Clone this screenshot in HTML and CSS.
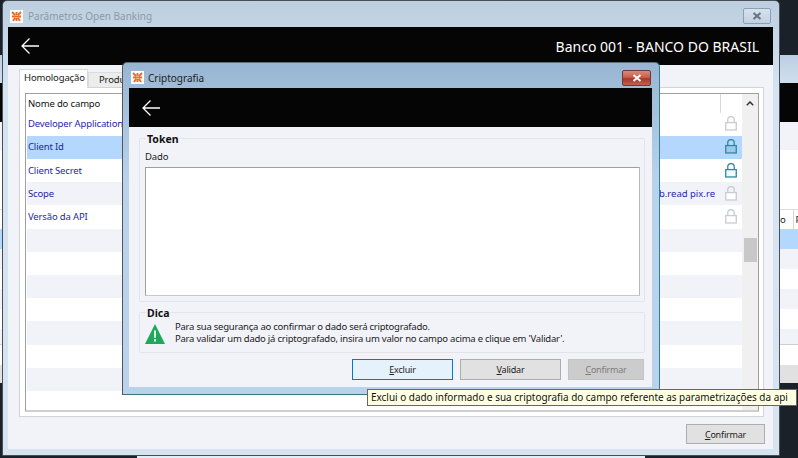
FILE: index.html
```html
<!DOCTYPE html>
<html lang="pt">
<head>
<meta charset="utf-8">
<title>Parâmetros Open Banking</title>
<link rel="stylesheet" href="styles.css">
</head>
<body>
<div class="desktop">
  <div class="back-window">
    <div class="bw-title"></div>
    <div class="bw-black"></div>
    <div class="bw-light"></div>
    <div class="bw-white"></div>
    <div class="bw-head"><span>o</span><span class="bw-p">P</span></div>
    <div class="bw-row sel"></div>
    <div class="bw-row alt"></div>
    <div class="bw-row"></div>
    <div class="bw-row alt"></div>
    <div class="bw-row"></div>
    <div class="bw-row alt short"></div>
    <div class="bw-lines"></div>
    <div class="bw-gray"></div>
  </div>
  <div class="bottom-strip"></div>

  <section class="window main">
    <header class="titlebar">
      <svg class="app-icon" viewBox="0 0 13 13"><rect width="13" height="13" fill="#fff"/><path d="M2 2l3 3M8 5l3-3M6.500 2v3M2 6.500h9M3 11l2-3M10 11L8 8M6.500 8v3" stroke="#f26a21" stroke-width="1.900" fill="none"/></svg>
      <span class="title-text faded">Parâmetros Open Banking</span>
      <span class="close inactive"><svg viewBox="0 0 10 8"><path d="M1.500 1l7 6M8.500 1l-7 6" stroke="#66727d" stroke-width="2"/></svg></span>
    </header>
    <div class="black-bar">
      <svg class="arrow" viewBox="0 0 18 16"><path d="M18 8H1M8.500 .5L1 8l7.500 7.500" stroke="#fff" stroke-width="1.300" fill="none"/></svg>
      <span class="bank">Banco 001 - BANCO DO BRASIL</span>
    </div>
    <div class="main-body">
      <div class="tabs">
        <span class="tab active">Homologação</span>
        <span class="tab">Produção</span>
      </div>
      <div class="tab-panel">
        <div class="grid">
          <div class="grid-table">
            <div class="row head"><span class="cell-name black">Nome do campo</span><span class="cell-mid"></span><span class="cell-lock sep"></span></div>
            <div class="row"><span class="cell-name">Developer Application Key</span><span class="cell-mid"></span><span class="cell-lock"><svg class="lock" viewBox="0 0 13 16"><path class="shackle" d="M3 7V4a3.500 3.500 0 0 1 7 0v3"/><rect class="body" x=".8" y="7" width="11.400" height="8"/></svg></span></div>
            <div class="row sel"><span class="cell-name">Client Id</span><span class="cell-mid"></span><span class="cell-lock"><svg class="lock on" viewBox="0 0 13 16"><path class="shackle" d="M3 7V4a3.500 3.500 0 0 1 7 0v3"/><rect class="body" x=".8" y="7" width="11.400" height="8"/></svg></span></div>
            <div class="row"><span class="cell-name">Client Secret</span><span class="cell-mid"></span><span class="cell-lock"><svg class="lock on" viewBox="0 0 13 16"><path class="shackle" d="M3 7V4a3.500 3.500 0 0 1 7 0v3"/><rect class="body" x=".8" y="7" width="11.400" height="8"/></svg></span></div>
            <div class="row alt"><span class="cell-name">Scope</span><span class="cell-mid">b.read pix.re</span><span class="cell-lock"><svg class="lock" viewBox="0 0 13 16"><path class="shackle" d="M3 7V4a3.500 3.500 0 0 1 7 0v3"/><rect class="body" x=".8" y="7" width="11.400" height="8"/></svg></span></div>
            <div class="row"><span class="cell-name">Versão da API</span><span class="cell-mid"></span><span class="cell-lock"><svg class="lock" viewBox="0 0 13 16"><path class="shackle" d="M3 7V4a3.500 3.500 0 0 1 7 0v3"/><rect class="body" x=".8" y="7" width="11.400" height="8"/></svg></span></div>
            <div class="row alt"></div>
            <div class="row"></div>
            <div class="row alt"></div>
            <div class="row"></div>
            <div class="row alt"></div>
            <div class="row"></div>
            <div class="row alt"></div>
          </div>
          <div class="scrollbar">
            <svg class="chev" viewBox="0 0 8 5"><path d="M.8 4.200L4 1l3.200 3.200" stroke="#333" stroke-width="1.500" fill="none"/></svg>
            <span class="thumb"></span>
          </div>
        </div>
      </div>
      <div class="main-actions"><button class="btn main-confirm"><u>C</u>onfirmar</button></div>
    </div>
  </section>

  <section class="window dialog">
    <header class="titlebar">
      <svg class="app-icon" viewBox="0 0 13 13"><rect width="13" height="13" fill="#fff"/><path d="M2 2l3 3M8 5l3-3M6.500 2v3M2 6.500h9M3 11l2-3M10 11L8 8M6.500 8v3" stroke="#f26a21" stroke-width="1.900" fill="none"/></svg>
      <span class="title-text">Criptografia</span>
      <span class="close danger"><svg viewBox="0 0 10 8"><path d="M1.500 1l7 6M8.500 1l-7 6" stroke="#fff" stroke-width="2"/></svg></span>
    </header>
    <div class="black-bar">
      <svg class="arrow" viewBox="0 0 18 16"><path d="M18 8H1M8.500 .5L1 8l7.500 7.500" stroke="#fff" stroke-width="1.300" fill="none"/></svg>
    </div>
    <div class="dialog-body">
      <div class="group token">
        <span class="legend">Token</span>
        <span class="field-label">Dado</span>
        <div class="textarea"></div>
      </div>
      <div class="group hint">
        <span class="legend">Dica</span>
        <svg class="warn" viewBox="0 0 20 20"><path d="M10 0L20 20H0z" fill="#1ea85a"/><path d="M9 6.500h2l-.3 7.500H9.300zM9 15.200h2v2.200H9z" fill="#fff"/></svg>
        <p class="hint-text">Para sua segurança ao confirmar o dado será criptografado.<br>Para validar um dado já criptografado, insira um valor no campo acima e clique em 'Validar'.</p>
      </div>
      <div class="dialog-actions">
        <button class="btn focus"><u>E</u>xcluir</button>
        <button class="btn"><u>V</u>alidar</button>
        <button class="btn disabled"><u>C</u>onfirmar</button>
      </div>
    </div>
  </section>

  <div class="tooltip">Exclui o dado informado e sua criptografia do campo referente as parametrizações da api</div>
</div>
</body>
</html>
```

FILE: styles.css
```css
* { box-sizing: border-box; }
html, body { margin: 0; padding: 0; }
body { width: 798px; height: 458px; overflow: hidden; background: #1b2128; font-family: "Noto Sans", "Liberation Sans", sans-serif; font-size: 9.5px; letter-spacing: -0.15px; color: #1a1a1a; }
.desktop { position: relative; width: 798px; height: 458px; overflow: hidden; }

/* window behind, visible only at the left and right edges */
.back-window { position: absolute; left: -20px; top: 55px; width: 840px; height: 328px; display: flex; flex-direction: column; background: #f2f3f9; }
.bw-title { height: 28px; background: linear-gradient(#bccfe2, #cfdeed); }
.bw-black { height: 39px; background: #050505; }
.bw-light { height: 28px; background: #f2f3f9; }
.bw-white { height: 60px; background: #fff; border-bottom: 1px solid #dcdcdc; }
.bw-head { height: 19px; background: #fff; padding-left: 800px; display: flex; align-items: center; font-size: 9.5px; }
.bw-p { margin-left: 7px; padding-left: 2px; border-left: 1px solid #d8d8d8; line-height: 19px; }
.bw-row { height: 20px; background: #fff; }
.bw-row.sel { background: #b3d7fd; }
.bw-row.alt { background: #f2f3f9; }
.bw-row.short { height: 15px; }
.bw-lines { height: 21px; background: #fff; border-top: 1px solid #cfcfcf; }
.bw-gray { flex: 1; background: #e1e1e1; }
.bottom-strip { position: absolute; left: 137px; top: 455px; width: 508px; height: 3px; background: #e4edf6; }

/* windows */
.window { position: absolute; display: flex; flex-direction: column; border: 1px solid #4a4f55; border-radius: 5px 5px 0 0; }
.main { left: 2px; top: 0; width: 778px; height: 456px; padding: 0 6px 6px 5px; background: linear-gradient(#bccedf, #d6e4f2 90px); }
.dialog { left: 122px; top: 62px; width: 538px; height: 333px; padding: 0 7px 7px 6px; background: linear-gradient(#98b6d3, #b9d3ec 120px); border-color: #5a6f78 #2d8296 #3d6f7d #555; }

.titlebar { display: flex; align-items: center; height: 26px; flex: none; padding: 4px 0 0 2px; letter-spacing: 0; }
.dialog .titlebar { height: 25px; }
.app-icon { width: 13px; height: 13px; flex: none; margin-right: 5px; }
.dialog .app-icon { margin-right: 4px; }
.title-text { font-size: 10px; color: #222; flex: 1; }
.title-text.faded { color: #8c9aa6; }
.close { width: 28px; height: 16px; display: flex; align-items: center; justify-content: center; border-radius: 2px; flex: none; }
.close svg { width: 10px; height: 8px; }
.close.inactive { border: 1px solid #8ba0b5; background: linear-gradient(#d6e2ee, #c2d1e0); margin-right: 2px; }
.close.danger { width: 29px; border: 1px solid #6a3a3f; background: linear-gradient(#d98a78 0, #c85f4c 45%, #a8372a 55%, #c4604e); margin-right: 1px; }

.black-bar { height: 38px; flex: none; background: #050505; display: flex; align-items: center; justify-content: space-between; padding: 0 14px 0 13px; color: #fff; letter-spacing: 0; }
.dialog .black-bar { height: 39px; }
.arrow { width: 18px; height: 16px; }
.bank { font-size: 14px; }

.main-body { flex: 1; background: #f2f3f9; display: flex; flex-direction: column; padding: 4px 9px 0 11px; }
.tabs { display: flex; height: 18px; align-items: flex-end; flex: none; }
.tab { height: 15px; padding: 0 12px 0 10px; background: #ececec; border: 1px solid #dcdcdc; border-bottom: 0; line-height: 14px; width: 70px; white-space: nowrap; overflow: hidden; }
.tab.active { height: 19px; background: #fff; border-color: #d9d9d9; padding: 1px 0 0 4px; width: 69px; line-height: 14px; margin-bottom: -1px; position: relative; z-index: 1; }
.tab-panel { height: 330px; flex: none; background: #fff; border: 1px solid #d4d4d4; padding: 5px 4px 4px 5px; }
.grid { height: 100%; display: flex; border: 1px solid #a0a0a0; border-bottom: 2px solid #cfcfcf; background: #fff; padding-left: 1px; }
.grid-table { flex: 1; display: flex; flex-direction: column; overflow: hidden; min-width: 0; }
.row { height: 23.200px; flex: none; display: flex; align-items: center; background: #fff; color: #1f1fb0; padding: 0 0 1px 1px; }
.row.head { height: 18.700px; color: #111; padding-bottom: 0; }
.row.alt { background: #f2f3f9; }
.row.sel { background: #b3d7fd; }
.cell-name { width: 630px; white-space: nowrap; flex: none; }
.cell-name.black { color: #111; }
.cell-mid { flex: 1; text-align: right; white-space: nowrap; padding-right: 5px; overflow: hidden; letter-spacing: 0; }
.cell-lock { width: 22px; height: 100%; display: flex; align-items: center; flex: none; padding-left: 5px; }
.cell-lock.sep { border-left: 1px solid #d8d8d8; }
.lock { width: 12px; height: 15px; }
.lock .shackle, .lock .body { fill: none; stroke: #c9cbce; stroke-width: 1.400; }
.lock .body { fill: #fff; }
.lock.on .shackle, .lock.on .body { stroke: #2f86a6; }
.lock.on .body { fill: #f2fafd; }
.row.sel .lock .body { fill: #9ccbe8; }
.scrollbar { width: 16px; flex: none; background: #f0f0f0; display: flex; flex-direction: column; align-items: center; padding-top: 7px; }
.chev { width: 8px; height: 5px; flex: none; }
.thumb { width: 13px; height: 24px; background: #c8c8c8; margin-top: 132px; flex: none; }
.main-actions { display: flex; justify-content: flex-end; padding-top: 7px; }

.btn { font: inherit; font-size: 9px; letter-spacing: -0.2px; color: #222; background: #e1e1e1; border: 1px solid #adadad; padding: 0; height: 21px; width: 101px; }
.btn.focus { background: #e5f1fb; border: 1px solid #0078d7; }
.btn.disabled { background: #cccccc; border-color: #c4c4c4; color: #7d7d7d; width: 76px; }
.btn.main-confirm { width: 79px; height: 20px; margin-right: -1px; }

.dialog-body { flex: 1; background: #f2f3f9; padding: 11px 7px 0 10px; display: flex; flex-direction: column; }
.group { position: relative; border: 1px solid #e3e4ea; border-radius: 2px; flex: none; }
.legend { position: absolute; left: 6px; top: -6px; background: #f2f3f9; padding: 0 1px; font-weight: 700; font-size: 10.5px; letter-spacing: 0; line-height: 12px; color: #111; }
.token { height: 164px; padding: 10px 4px 5px 5px; display: flex; flex-direction: column; }
.field-label { line-height: 15px; height: 18px; flex: none; }
.textarea { flex: 1; background: #fff; border: 1px solid #9f9f9f; border-bottom-color: #c9c9c9; border-right-color: #b9b9b9; }
.hint { height: 41px; margin-top: 10px; display: flex; align-items: center; padding-left: 5px; gap: 10px; }
.warn { width: 20px; height: 20px; flex: none; margin-top: 2px; }
.hint-text { margin: 1px 0 0; line-height: 12px; letter-spacing: -0.23px; color: #222; white-space: nowrap; }
.dialog-actions { display: flex; justify-content: flex-end; gap: 7px; margin-top: 6px; padding-right: 1px; }

.tooltip { position: absolute; left: 367px; top: 389px; width: 430px; height: 17px; background: #ffffe1; border: 1px solid #666; color: #111; line-height: 14px; padding-left: 3px; font-size: 9.95px; letter-spacing: 0; white-space: nowrap; }
```
